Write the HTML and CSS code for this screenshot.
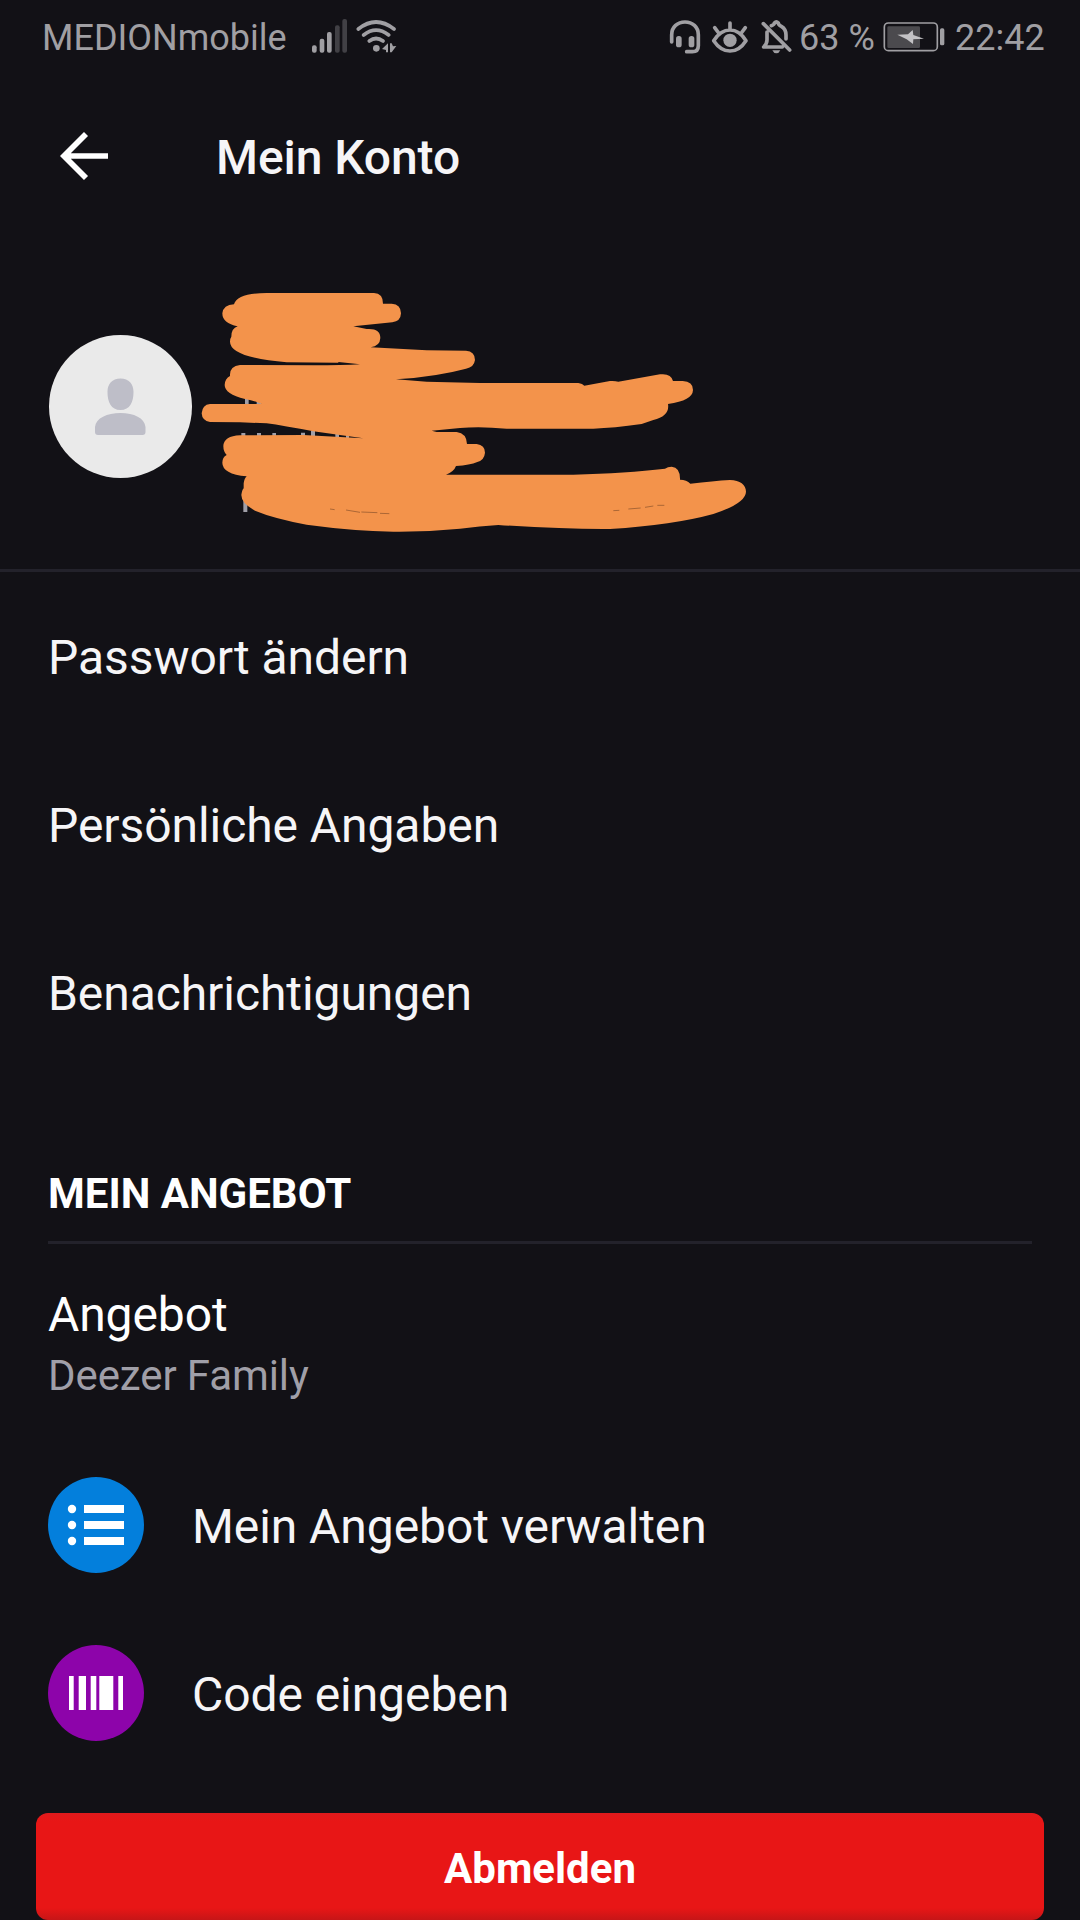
FILE: index.html
```html
<!DOCTYPE html>
<html lang="de">
<head>
<meta charset="utf-8">
<title>Mein Konto</title>
<link rel="stylesheet" href="styles.css">
</head>
<body>
<div class="screen">
  <div class="status">
    <span class="carrier">MEDIONmobile</span>
    <svg class="signal" viewBox="930 50 270 120" width="90" height="40">
      <g fill="#a09fa3"><rect x="936" y="135" width="14" height="22" rx="6"/><rect x="959" y="115" width="14" height="42" rx="6"/><rect x="981" y="95" width="14" height="62" rx="6"/></g>
      <g fill="#414045"><rect x="1005" y="75" width="14" height="82" rx="6"/><rect x="1027" y="56" width="14" height="101" rx="6"/></g>
      <g fill="none" stroke="#a09fa3" stroke-width="11" stroke-linecap="round"><path d="M1075 86Q1128 44 1182 86M1091 104Q1128 75 1166 104M1108 122Q1128 107 1149 122"/></g>
      <circle cx="1129" cy="144" r="10" fill="#a09fa3"/>
      <path d="M1164 129V156H1158V149L1146 146ZM1170 129H1175L1179 138L1189 137L1175 156H1170Z" fill="#a09fa3"/>
    </svg>
    <span class="spacer"></span>
    <svg class="modes" viewBox="84 50 378 120" width="126" height="40">
      <g fill="none" stroke="#a09fa3" stroke-width="11" stroke-linecap="round" stroke-linejoin="round">
        <path d="M95 125V103C95 80 113 65 135 65S175 80 175 103V136Q175 154 157 154H140"/>
        <path d="M221 121Q242 89 270 89T318 121Q298 152 270 152T221 121ZM270 68V87M224 82L236 98M316 82L304 98"/>
        <path d="M370 70L449 149M381 95V119Q381 131 371 140H427M394 76Q403 73 403 68Q409 62 415 68Q415 74 424 78Q438 86 438 104V116"/>
      </g>
      <g fill="#a09fa3"><rect x="108" y="107" width="17" height="34" rx="8"/><rect x="146" y="107" width="17" height="34" rx="8"/><circle cx="270" cy="120" r="20"/><path d="M397 150H421Q417 159 409 159T397 150Z"/></g>
    </svg>
    <span class="percent">63 %</span>
    <svg class="battery" viewBox="726 50 192 120" width="64" height="40">
      <rect x="733" y="68" width="159" height="83" rx="12" fill="none" stroke="#a09fa3" stroke-width="5"/>
      <rect x="742" y="78" width="98" height="65" rx="4" fill="#4b4a4e"/>
      <rect x="900" y="84" width="13" height="51" rx="5" fill="#a09fa3"/>
      <path d="M772 103L804 102L818 89L820 104L852 115L820 117L819 131L800 117Z" fill="#c3c2c5"/>
    </svg>
    <span class="clock">22:42</span>
  </div>

  <header class="topbar">
    <svg class="back" viewBox="0 0 48 48" width="48" height="48" fill="none" stroke="#fff" stroke-width="5.7"><path d="M48 24H4M26 2L4 24L26 46"/></svg>
    <h1 class="title">Mein Konto</h1>
  </header>

  <section class="profile">
    <svg class="avatar" viewBox="0 0 143 143" width="143" height="143">
      <circle cx="71.5" cy="71.5" r="71.5" fill="#eaeaea"/>
      <path d="M71.500 43.500C80 43.500 84.500 49 84.500 57C84.500 67 81 75 71.500 75S58.500 67 58.500 57C58.500 49 63 43.500 71.500 43.500ZM46 97V92C47 83 58 78 71.500 78S95.500 83 96.500 92V97Q96.500 100 93.500 100H49Q46 100 46 97Z" fill="#bebec8"/>
    </svg>
    <svg class="redaction" viewBox="60 60 1650 735" width="550" height="245">
      <path fill="#a09fa8" d="M195 385H206V405H195ZM230 396H244V404H230ZM184 489H196V500H184ZM231 489H243V500H231ZM277 489H288V500H277ZM363 488H375V500H363ZM393 482H405V502H393ZM466 490H477V506H466ZM498 495H507V508H498ZM190 690H202V726H190Z"/>
      <path fill="#f3934b" d="M162 103C168 80 205 69 260 69L582 69Q609 70 609 101L635 101Q663 103 663 130Q662 154 637 157L520 169L560 177Q601 174 601 204Q600 228 572 232L740 241L858 242Q885 244 885 270Q882 292 858 296Q770 320 648 328L740 335L900 339L1195 339Q1208 341 1213 347L1290 333Q1305 332 1315 335L1440 313Q1473 309 1479 333L1508 333Q1539 334 1539 360Q1538 392 1464 402Q1470 438 1420 450L1385 462Q1300 474 1240 476L980 476Q900 468 840 474L755 482L770 486L830 486Q860 490 861 522L890 522Q915 525 915 548Q913 570 892 576Q870 585 828 588Q822 605 798 614L1180 614Q1340 609 1455 596Q1463 590 1475 590Q1501 592 1500 629Q1520 629 1531 641Q1600 633 1650 630C1680 630 1698 645 1698 665Q1697 700 1600 732Q1480 765 1290 777Q1150 778 955 765Q900 768 840 776Q740 786 640 785Q520 783 380 764Q280 745 225 722Q184 700 184 675Q186 660 191 655L191 640Q193 625 200 619Q127 612 127 578Q127 562 140 555Q130 545 130 528Q132 498 180 496L370 495L550 505Q470 494 400 484Q310 467 260 460L180 457L90 456Q66 452 65 430Q67 404 90 402L245 402Q225 392 195 387Q134 372 134 345Q135 325 150 318Q148 288 180 285L400 286Q490 286 540 283L475 276L475 278L320 277Q150 262 150 215Q150 205 154 200Q154 175 173 169Q127 160 127 130Q130 105 162 103Z"/>
      <path fill="none" stroke="#87502b" stroke-width="2" d="M450 717L464 719M498 720L540 727M544 726L592 728M600 730L628 731M1300 722L1318 721M1345 717L1382 714M1395 712L1420 708M1432 706L1453 706"/>
    </svg>
  </section>

  <nav class="menu">
    <a class="row">Passwort ändern</a>
    <a class="row">Persönliche Angaben</a>
    <a class="row">Benachrichtigungen</a>
  </nav>

  <section class="offer">
    <h2 class="section-title">MEIN ANGEBOT</h2>
    <div class="plan">
      <div class="plan-label">Angebot</div>
      <div class="plan-name">Deezer Family</div>
    </div>
    <a class="row action">
      <svg viewBox="0 0 96 96" width="96" height="96"><circle cx="48" cy="48" r="48" fill="#037fdc"/><path d="M36 28H76V36H36ZM36 44H76V52H36ZM36 60H76V68H36Z" fill="#fff"/><g fill="#fff"><circle cx="24" cy="32" r="4.200"/><circle cx="24" cy="48" r="4.200"/><circle cx="24" cy="64" r="4.200"/></g></svg>
      <span>Mein Angebot verwalten</span>
    </a>
    <a class="row action">
      <svg viewBox="0 0 96 96" width="96" height="96"><circle cx="48" cy="48" r="48" fill="#8d04aa"/><path d="M21 31H25.700V65H21ZM30.700 31H38V65H30.700ZM42.700 31H48.300V65H42.700ZM51.300 31H65.300V65H51.300ZM70.300 31H75V65H70.300Z" fill="#fff"/></svg>
      <span>Code eingeben</span>
    </a>
  </section>

  <button class="logout">Abmelden</button>
</div>
</body>
</html>
```
FILE: styles.css
```css
* { box-sizing: border-box; }
body { margin: 0; background: #121116; }
.screen {
  width: 1080px;
  height: 1920px;
  overflow: hidden;
  display: flex;
  flex-direction: column;
  background: #121116;
  color: #f6f5f7;
  font-family: Roboto, "Noto Sans", sans-serif;
}
svg { display: block; flex: none; }
.status {
  height: 75px;
  padding: 0 35px 0 42px;
  display: flex;
  align-items: center;
  color: #a09fa3;
  font-size: 36px;
  line-height: 44px;
  white-space: nowrap;
}
.carrier { width: 268px; }
.spacer { flex: 1; }
.percent { width: 86px; padding-left: 5px; }
.battery { margin-left: 2px; }
.clock { width: 99px; padding-left: 9px; }
.status .signal, .status .modes, .status .battery { margin-top: -2px; }
.topbar {
  height: 162px;
  padding: 0 60px;
  display: flex;
  align-items: center;
}
.back { width: 48px; }
.title {
  margin: 3px 0 0 108px;
  font-size: 48px;
  font-weight: 500;
  line-height: 56px;
  letter-spacing: -0.08px;
}
.profile {
  height: 335px;
  padding: 53px 48px 0 48.5px;
  display: flex;
  align-items: flex-start;
  border-bottom: 3px solid #23222b;
}
.avatar { margin: 44.500px 8.500px 0 0; }
.menu { padding: 2px 48px 0; height: 570px; }
.row {
  height: 168px;
  display: flex;
  align-items: center;
  font-size: 48px;
  line-height: 56px;
  letter-spacing: -0.07px;
}
.offer { padding: 0 48px; }
.section-title {
  margin: 0;
  height: 102px;
  padding-top: 27px;
  font-size: 42px;
  font-weight: 700;
  line-height: 50px;
  color: #fff;
  border-bottom: 3px solid #23222b;
}
.plan { height: 197px; padding-top: 41px; }
.plan-label { font-size: 48px; line-height: 60px; letter-spacing: -0.1px; color: #fff; }
.plan-name { margin-top: 1px; font-size: 42px; line-height: 60px; letter-spacing: -0.1px; color: #a09fa8; }
.action { gap: 48px; }
.action span { padding-top: 3px; }
.logout {
  width: 1008px;
  height: 107px;
  margin: 36px auto 0;
  padding: 4px 0 0;
  flex: none;
  border: 0;
  border-radius: 12px;
  background: linear-gradient(#df1a1c, #e81616 8px, #e81616 95px, #c61517 107px);
  color: #fff;
  font: 700 42px/50px Roboto, "Noto Sans", sans-serif;
}
```
